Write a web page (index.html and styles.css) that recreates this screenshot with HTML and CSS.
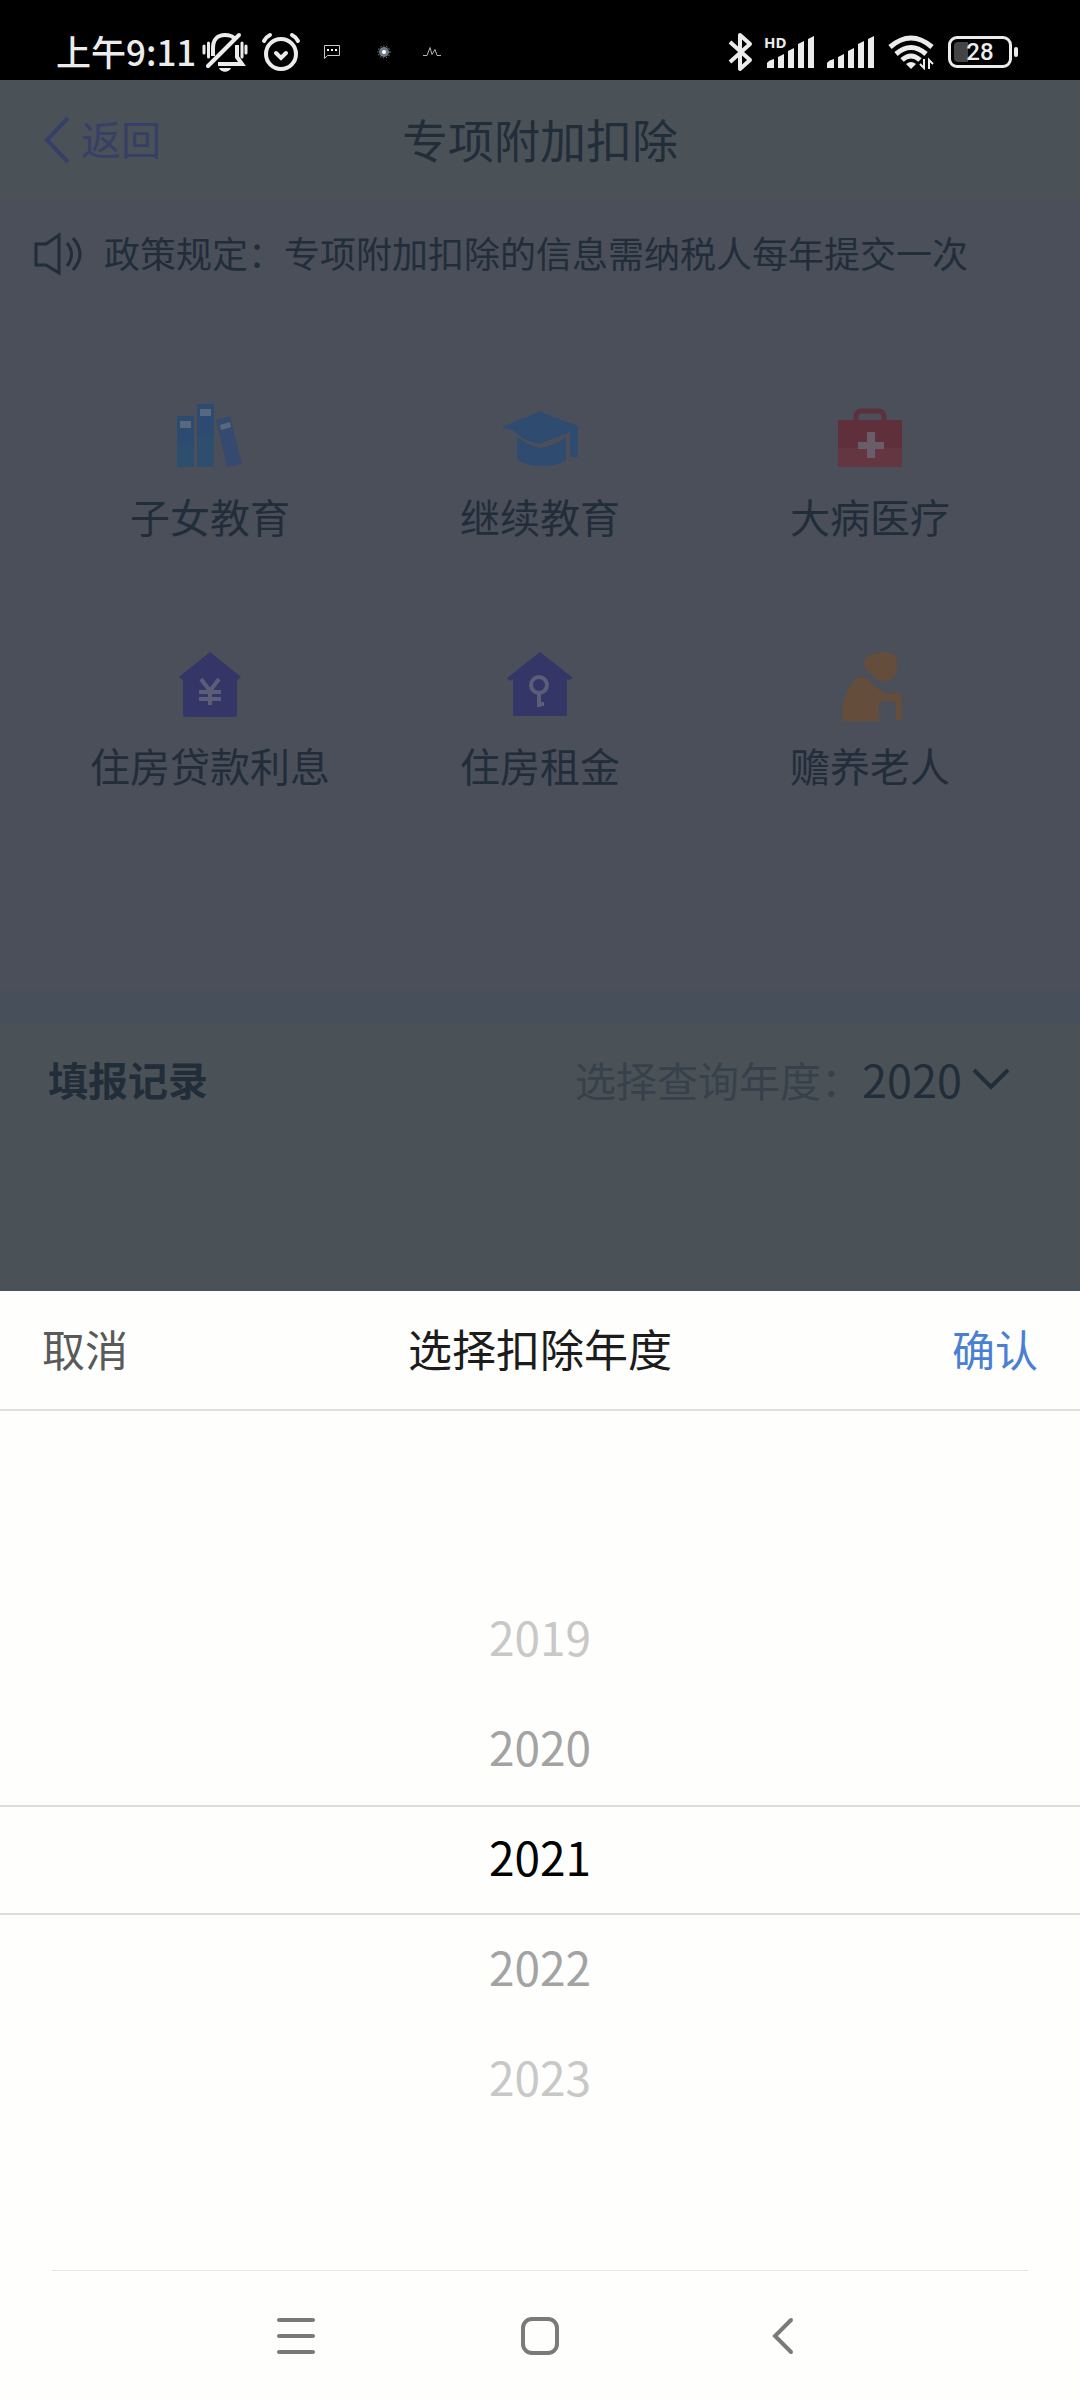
FILE: index.html
```html
<!DOCTYPE html>
<html lang="zh-CN">
<head>
<meta charset="utf-8">
<meta name="viewport" content="width=device-width, initial-scale=1">
<title>专项附加扣除</title>
<link rel="stylesheet" href="styles.css">
</head>
<body>
<div class="screen">
  <div class="status">
    <div class="status-left">
      <span class="clock">上午9:11</span>
      <svg width="46" height="42" viewBox="0 0 46 42" fill="none" stroke="#ececec" stroke-width="4">
        <path d="M11 25V17C11 8 16 4 23 4c4 0 7 1 9 3M35 14v12l5 7H16" />
        <path d="M6 35L37 4" stroke-linecap="round"/>
        <path d="M2 15v7M6.500 12v14M40 12v14M44 15v7" stroke-width="3" stroke-linecap="round"/>
        <path d="M17 37h12c-2 5-10 5-12 0z" fill="#ececec" stroke="none"/>
      </svg>
      <svg class="alarm" width="40" height="40" viewBox="0 0 40 40" fill="none" stroke="#ececec" stroke-width="4" stroke-linecap="round">
        <circle cx="20" cy="22" r="15"/>
        <path d="M3 9Q5 5 9 3M37 9Q35 5 31 3M15 21l5 5 5-5"/>
      </svg>
      <svg class="mini" width="18" height="16" viewBox="0 0 18 16" fill="none" stroke="#c8c8c8">
        <path d="M1.500 1.500h15v10h-12l-3 3z"/><path d="M4 6h2M8 6h2M12 6h2" stroke="#fff" stroke-width="2"/>
      </svg>
      <svg class="mini-dot" width="14" height="14" viewBox="0 0 14 14">
        <circle cx="7" cy="7" r="6" fill="none" stroke="#a9b2bd" stroke-dasharray="1 2"/><circle cx="7" cy="7" r="5" fill="#6f7b89"/><circle cx="7" cy="7" r="2" fill="#fff"/>
      </svg>
      <svg class="mini-wave" width="18" height="14" viewBox="0 0 18 14" fill="none" stroke="#b5b5b5"><path d="M0 10.500h4l3-8 2 7 3-5 2 6h4"/></svg>
    </div>
    <div class="status-right">
      <svg width="26" height="42" viewBox="0 0 26 42" fill="none" stroke="#ececec" stroke-width="4" stroke-linejoin="round"><path d="M2 11l20 18-10 9V4l10 9L2 31"/></svg>
      <svg class="hd" width="52" height="48" viewBox="0 -6 52 48" fill="#ececec"><text x="0" y="14" class="hd-text">HD</text><path d="M3 34v-5q2-3 7-4v9zM14 34V23l6-3v14zM24 34V17l6-3v20zM34 34V10l6-3v27zM44 34V5l6-3v32z"/></svg>
      <svg class="signal" width="50" height="36" viewBox="0 0 50 36" fill="#ececec"><path d="M1 34v-5q2-3 7-4v9zM12 34V23l6-3v14zM22 34V17l6-3v20zM32 34V10l6-3v27zM42 34V5l6-3v32z"/></svg>
      <svg class="wifi" width="46" height="36" viewBox="0 0 46 36" fill="none" stroke="#ececec" stroke-width="5">
        <path d="M2 13Q23-5 44 13M8 20Q23 7 38 20M14 26q9-8 18 0"/><path d="M18 30q5-4 10 0l-5 5z" fill="#ececec" stroke="none"/><path d="M36 25v9l-4-4M41 35v-9l4 4" stroke-width="2"/>
      </svg>
      <span class="battery"><span class="battery-level">28</span></span>
    </div>
  </div>

  <main class="page">
    <header class="topbar">
      <a class="back" href="#"><svg width="26" height="48" viewBox="0 0 26 48" fill="none" stroke="currentColor" stroke-width="4"><path d="M24 2L3 24l21 22"/></svg><span class="label">返回</span></a>
      <h1 class="title label">专项附加扣除</h1>
    </header>
    <div class="notice">
      <svg width="50" height="44" viewBox="0 0 50 44" fill="none" stroke="currentColor" stroke-width="3"><path d="M2 12h10L25 3v38L12 33H2zM33 11q9 11 0 23M39 6q14 16 0 32"/></svg>
      <span class="label">政策规定：专项附加扣除的信息需纳税人每年提交一次</span>
    </div>

    <nav class="grid">
      <a class="tile" href="#">
        <svg width="72" height="72" viewBox="0 0 72 72"><g fill="#2d4b70"><path d="M3 16h17v51H3z"/><path d="M23 4h17v63H23z"/></g><path d="M42 20l14-4 12 48-15 3z" fill="#364a70"/><path d="M3 45h17v22H3zM23 35h17v32H23z" fill="#2d526b" opacity=".6"/><path d="M6 21h11v7H6zM26 9h11v7H26zM46 25l10-3 1 5-10 3z" fill="#59697d"/></svg>
        <span>子女教育</span></a>
      <a class="tile" href="#">
        <svg width="78" height="72" viewBox="0 0 78 72" fill="#2f4b6f"><path d="M1 27l32-13q6-5 12 0l32 12v31h-8V32L39 44Q24 42 13 31z"/><path d="M16 37q12 9 24 11 13-2 25-11v23q-8 6-25 6t-24-7z"/></svg>
        <span>继续教育</span></a>
      <a class="tile" href="#">
        <svg width="72" height="72" viewBox="0 0 72 72"><path d="M22 20v-3q0-6 6-6h16q6 0 6 6v3" fill="none" stroke="#5c303d" stroke-width="5"/><path d="M4 20h64v47H4z" fill="#602f3c"/><path d="M4 48h64v19H4z" fill="#643642"/><path d="M33 32h8v10h9v7h-9v9h-8v-9h-9v-7h9z" fill="#685d68"/></svg>
        <span>大病医疗</span></a>
      <a class="tile" href="#">
        <svg width="72" height="72" viewBox="0 0 72 72"><path d="M36 3l31 25-4 3v34q0 3-3 3H12q-3 0-3-3V31l-4-3z" fill="#343667"/><path d="M27 30l9 12 9-12M36 42v14M25 43h22M25 50h22" fill="none" stroke="#5b5e76" stroke-width="4"/></svg>
        <span>住房贷款利息</span></a>
      <a class="tile" href="#">
        <svg width="72" height="72" viewBox="0 0 72 72"><path d="M36 3l33 26-4 2-2-1v37H9V30l-3 2-3-3z" fill="#343667"/><circle cx="35" cy="36" r="8" fill="none" stroke="#5b5e76" stroke-width="4"/><path d="M35 44v14M35 55h5" fill="none" stroke="#5b5e76" stroke-width="4"/></svg>
        <span>住房租金</span></a>
      <a class="tile" href="#">
        <svg width="72" height="72" viewBox="0 0 72 72" fill="#654d3b"><path d="M31 10Q46-2 60 6q5 4 2 18-4 9-14 8-8-1-12-9-8-5-5-13z"/><path d="M8 72q-1-28 15-43 6-4 12 2 6 9 19 14l6-2q8 0 8 8v20h-6V54q-7-4-16-1-2 4-1 19z"/></svg>
        <span>赡养老人</span></a>
    </nav>

    <section class="records">
      <h2 class="records-title">填报记录</h2>
      <div class="year-query"><span id="query-label">选择查询年度：</span><button class="year-button" type="button" aria-describedby="query-label">2020<svg width="38" height="24" viewBox="0 0 38 24" fill="none" stroke="currentColor" stroke-width="4"><path d="M2 3l17 17L36 3"/></svg></button></div>
    </section>
  </main>

  <section class="sheet" role="dialog" aria-labelledby="sheet-title">
    <div class="sheet-head">
      <button class="cancel" type="button">取消</button>
      <h2 class="sheet-title" id="sheet-title">选择扣除年度</h2>
      <button class="confirm" type="button">确认</button>
    </div>
    <ul class="years" role="listbox" aria-labelledby="sheet-title">
      <li class="year far" role="option">2019</li>
      <li class="year near" role="option">2020</li>
      <li class="year selected" role="option" aria-selected="true">2021</li>
      <li class="year near" role="option">2022</li>
      <li class="year far" role="option">2023</li>
    </ul>
  </section>

  <nav class="system-nav">
    <button type="button" aria-label="菜单"><svg width="40" height="40" viewBox="0 0 40 40"><path d="M3 4h34M3 20h34M3 36h34"/></svg></button>
    <button type="button" aria-label="主页"><svg width="40" height="40" viewBox="0 0 40 40"><rect x="3" y="3" width="34" height="34" rx="9"/></svg></button>
    <button type="button" aria-label="返回"><svg width="40" height="40" viewBox="0 0 40 40"><path d="M27 4L11 20l16 16"/></svg></button>
  </nav>
</div>
</body>
</html>
```
FILE: styles.css
```css
* { box-sizing: border-box; }

body {
  margin: 0;
  background: #fefefd;
  font-family: "Noto Sans CJK SC", sans-serif;
}

h1, h2, ul { margin: 0; padding: 0; font-weight: 400; }
a { color: inherit; text-decoration: none; }
svg { display: block; flex: none; }

button {
  padding: 0;
  border: 0;
  background: none;
  color: inherit;
  font: inherit;
}

.screen {
  display: flex;
  flex-direction: column;
  min-height: 100vh;
}

/* Status bar */
.status {
  display: flex;
  justify-content: space-between;
  height: 80px;
  padding: 24px 62px 0 56px;
  background: #000;
  color: #ececec;
}

.status-left,
.status-right { display: flex; align-items: center; height: 56px; }

.clock {
  width: 146px;
  padding-bottom: 4px;
  font-size: 35px;
  font-weight: 500;
  white-space: nowrap;
}

.alarm { margin-left: 13px; }
.mini { margin-left: 22px; }
.mini-dot { margin-left: 36px; }
.mini-wave { margin-left: 32px; }
.hd { margin-left: 10px; }
.hd-text { font: 700 15px "Noto Sans", sans-serif; }
.signal { margin-left: 10px; }
.wifi { margin-left: 12px; }

.battery {
  position: relative;
  width: 64px;
  height: 32px;
  margin: 0 6px 0 14px;
  padding: 3px;
  border: 3px solid #ececec;
  border-radius: 9px;
}

.battery::after {
  content: "";
  position: absolute;
  top: 8px;
  right: -9px;
  width: 4px;
  height: 10px;
  border-radius: 2px;
  background: #ececec;
}

.battery-level {
  display: block;
  border-radius: 4px;
  background: linear-gradient(to right, #444 14px, transparent 14px);
  font: 500 24px/20px Roboto, sans-serif;
  text-align: center;
}

/* Dimmed page behind the sheet */
.page {
  flex: 1;
  background: #4a4f5a;
  color: #222d3a;
}

.label { padding-bottom: 4px; }

.topbar {
  display: grid;
  grid-template-columns: 1fr auto 1fr;
  align-items: center;
  height: 120px;
  padding: 0 44px;
  background: #4a5257;
}

.back {
  display: flex;
  align-items: center;
  gap: 11px;
  color: #363f67;
  font-size: 40px;
}

.title { font-size: 46px; }

.notice {
  display: flex;
  align-items: center;
  gap: 20px;
  height: 108px;
  padding: 0 34px;
  font-size: 36px;
  white-space: nowrap;
}

.grid {
  display: grid;
  grid-template-columns: repeat(3, 1fr);
  row-gap: 105px;
  padding: 92px 45px 197px;
}

.tile {
  display: flex;
  flex-direction: column;
  align-items: center;
  gap: 16px;
  font-size: 40px;
  line-height: 56px;
}

.records {
  display: flex;
  justify-content: space-between;
  height: 301px;
  padding: 0 70px 158px 48px;
  border-top: 34px solid #47505a;
  background: #4a5257;
  align-items: center;
}

.records-title { font-size: 40px; font-weight: 700; }
.year-query { display: flex; align-items: center; color: #37414b; font-size: 41px; }

.year-button {
  display: flex;
  align-items: center;
  gap: 10px;
  font-size: 45px;
  color: #222d3a;
}

/* Year picker */
.sheet { background: #fefefd; }

.sheet-head {
  display: grid;
  grid-template-columns: 1fr auto 1fr;
  align-items: center;
  height: 120px;
  padding: 0 42px 4px;
  border-bottom: 2px solid #e0e0e0;
  font-size: 43px;
}

.sheet-title { color: #1c1c1c; font-size: 44px; }
.cancel { justify-self: start; color: #5a5a5a; }
.confirm { justify-self: end; color: #4a80d4; }
.years { padding: 174px 0 135px; list-style: none; }

.year {
  height: 110px;
  font-size: 46px;
  line-height: 102px;
  text-align: center;
}

.near { color: #a3a3a3; }
.far { color: #c8c8c8; }
.selected { border: solid #dcdcdc; border-width: 2px 0; color: #000; line-height: 98px; }

/* Android navigation */
.system-nav {
  display: flex;
  justify-content: center;
  gap: 204px;
  height: 130px;
  margin: 0 52px;
  border-top: 1px solid #e6e6e6;
}

.system-nav svg {
  fill: none;
  stroke: #7a7a7a;
  stroke-width: 4;
  stroke-linecap: round;
}
```
